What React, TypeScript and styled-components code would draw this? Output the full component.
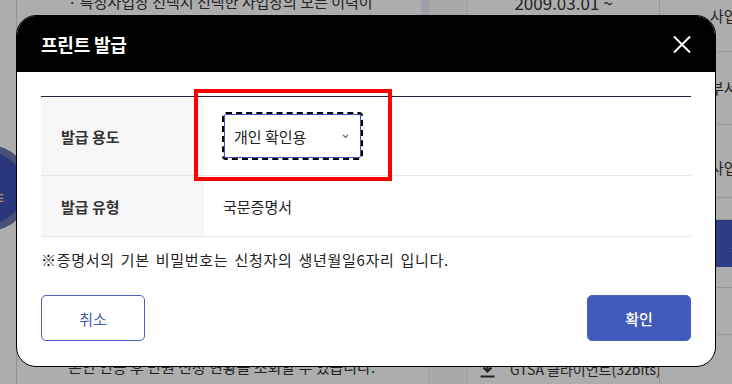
import React from "react";
import styled, { createGlobalStyle } from "styled-components";

const GlobalStyle = createGlobalStyle`
  html, body { margin: 0; padding: 0; }
  body {
    width: 732px; height: 384px; overflow: hidden;
    font-family: "Noto Sans CJK KR", "Noto Sans", sans-serif;
    background: #fff;
  }
  * { box-sizing: border-box; }
`;

/* ---------- background page ---------- */
const Page = styled.div`
  width: 732px;
  height: 384px;
  overflow: hidden;
  display: flex;
  background: #fff;
  color: #333;
  font-size: 15px;
`;

const LeftPane = styled.div`
  flex: none;
  width: 405px;
  margin-left: 16px;
  display: flex;
  flex-direction: column;
  justify-content: space-between;
  border-left: 1px solid #d4d8f0;
  overflow: hidden;
`;

const PaneText = styled.div<{ $top?: number; $bottom?: number }>`
  line-height: 20px;
  padding-left: 51px;
  margin-top: ${(p) => p.$top ?? 0}px;
  margin-bottom: ${(p) => p.$bottom ?? 0}px;
  white-space: nowrap;
  color: #333;
`;

const ScrollTrack = styled.div`
  flex: none;
  width: 8px;
  display: flex;
  flex-direction: column;
  border-right: 1px solid #e4e4ea;
`;

const ScrollThumb = styled.div`
  height: 40px;
  background: #e8ebf8;
`;

const NarrowCol = styled.div`
  flex: none;
  width: 39px;
  border-right: 1px solid #ececec;
  background: #fafafa;
`;

const DateCol = styled.div`
  flex: none;
  width: 191px;
  display: flex;
  flex-direction: column;
  justify-content: space-between;
`;

const DateText = styled.div`
  line-height: 20px;
  margin-top: -7px;
  font-size: 17px;
  text-align: center;
  color: #333;
  white-space: nowrap;
`;

const Download = styled.div`
  display: flex;
  align-items: center;
  gap: 15px;
  margin-bottom: 5px;
  padding-left: 12px;
  line-height: 20px;
  font-size: 14px;
  color: #333;
  white-space: nowrap;
`;

const DownloadIcon = styled.svg`
  flex: none;
  margin-top: 4px;
`;

const RightCol = styled.div`
  flex: 1;
  min-width: 0;
  display: flex;
  flex-direction: column;
  border-left: 1px solid #dcdcdc;
  overflow: hidden;
`;

const RightCell = styled.div<{ $h: number; $blue?: boolean; $pt?: number; $pl?: number }>`
  height: ${(p) => p.$h}px;
  flex: none;
  display: flex;
  align-items: ${(p) => (p.$pt !== undefined ? "flex-start" : "center")};
  padding-top: ${(p) => p.$pt ?? 0}px;
  padding-left: ${(p) => p.$pl ?? 50}px;
  line-height: 20px;
  border-bottom: 1px solid ${(p) => (p.$blue ? "transparent" : "#e0e0e0")};
  background: ${(p) => (p.$blue ? "#4659c4" : "transparent")};
  color: ${(p) => (p.$blue ? "#fff" : "#333")};
  white-space: nowrap;
`;

const FloatBadge = styled.div`
  position: absolute;
  left: -55px;
  top: 145px;
  width: 86px;
  height: 86px;
  border-radius: 50%;
  background: #6b76b3;
  display: flex;
  align-items: center;
  justify-content: center;
`;

const FloatInner = styled.div`
  width: 72px;
  height: 72px;
  border-radius: 50%;
  background: #3e51b5;
  display: flex;
  align-items: center;
  justify-content: flex-end;
  padding: 18px 19px 0 0;
  color: #ffd54a;
  font-size: 14px;
  font-weight: 700;
`;

/* ---------- modal ---------- */
const Overlay = styled.div`
  position: fixed;
  inset: 0;
  background: rgba(0, 0, 0, 0.32);
  display: flex;
  justify-content: center;
  align-items: flex-start;
  padding-top: 15px;
`;

const Modal = styled.div`
  width: 700px;
  background: #fff;
  border: 1px solid #000;
  border-radius: 20px;
  overflow: hidden;
  font-family: "Noto Sans CJK KR", "Noto Sans", sans-serif;
`;

const Header = styled.div`
  height: 56px;
  background: #000;
  display: flex;
  align-items: center;
  justify-content: space-between;
  padding: 0 24px;
`;

const Title = styled.h2`
  margin: 0;
  font-size: 18px;
  font-weight: 700;
  color: #fff;
  letter-spacing: -0.2px;
`;

const CloseButton = styled.button`
  border: 0;
  background: none;
  padding: 0;
  width: 18px;
  height: 18px;
  display: flex;
  align-items: center;
  justify-content: center;
  cursor: pointer;
`;

const Body = styled.div`
  padding: 24px 24px 25px;
`;

const Table = styled.div`
  position: relative;
  border-top: 1px solid #1c2344;
`;

const Row = styled.div<{ $h: number }>`
  display: grid;
  grid-template-columns: 163px 1fr;
  height: ${(p) => p.$h + 1}px;
  border-bottom: 1px solid #e6e6e6;
`;

const Label = styled.div`
  background: #f7f7f7;
  display: flex;
  align-items: center;
  padding-left: 20px;
  font-size: 15px;
  font-weight: 700;
  color: #333;
`;

const Value = styled.div`
  display: flex;
  align-items: center;
  padding-left: 19px;
  font-size: 15px;
  color: #222;
`;

const Select = styled.div`
  width: 137px;
  height: 44px;
  margin-left: 1px;
  border: 1px solid #3f51b5;
  border-radius: 2px;
  outline: 2px dashed #000;
  outline-offset: 0;
  display: flex;
  align-items: center;
  justify-content: space-between;
  padding: 0 11px 0 9px;
  font-size: 15px;
  color: #222;
`;

const Highlight = styled.div`
  position: absolute;
  left: 153px;
  top: -8px;
  width: 198px;
  height: 92px;
  border: 4px solid #ff0000;
  pointer-events: none;
`;

const Notice = styled.p`
  margin: 12px 0 0;
  font-size: 15px;
  line-height: 22px;
  word-spacing: 2px;
  letter-spacing: 0.7px;
  color: #222;
`;

const Actions = styled.div`
  margin-top: 24px;
  display: flex;
  justify-content: space-between;
`;

const ActionButton = styled.button<{ $primary?: boolean }>`
  width: 104px;
  height: 46px;
  border-radius: 5px;
  border: 1px solid #4a5fc1;
  background: ${(p) => (p.$primary ? "#435abd" : "#fff")};
  color: ${(p) => (p.$primary ? "#fff" : "#4358bd")};
  font-family: "Noto Sans CJK KR", "Noto Sans", sans-serif;
  font-size: 15px;
  font-weight: ${(p) => (p.$primary ? 500 : 400)};
  cursor: pointer;
`;

export default function App() {
  return (
    <>
      <GlobalStyle />
      <Page>
        <LeftPane>
          <PaneText $top={-8}>· 특정사업장 선택시 선택한 사업장의 모든 이력이</PaneText>
          <PaneText $bottom={7}>본인 인증 후 민원 신청 현황을 조회할 수 있습니다.</PaneText>
        </LeftPane>
        <ScrollTrack>
          <ScrollThumb />
        </ScrollTrack>
        <NarrowCol />
        <DateCol>
          <DateText>2009.03.01 ~</DateText>
          <Download>
            <DownloadIcon width="15" height="14" viewBox="0 0 15 14">
              <path d="M7.5 0 V7 M3.5 3.5 L7.5 7.5 L11.5 3.5" stroke="#333" strokeWidth="2.2" fill="none" />
              <rect x="0.5" y="11.5" width="14" height="2" fill="#333" />
            </DownloadIcon>
            <span>GTSA 클라이언트(32bits)</span>
          </Download>
        </DateCol>
        <RightCol>
          <RightCell $h={52} $pt={6}>사업장</RightCell>
          <RightCell $h={73}>부서</RightCell>
          <RightCell $h={73} $pt={33}>사업장</RightCell>
          <RightCell $h={22} />
          <RightCell $h={47} $blue $pl={71}>
            조회
          </RightCell>
          <RightCell $h={21} />
          <RightCell $h={47} />
        </RightCol>
        <FloatBadge>
          <FloatInner>≡</FloatInner>
        </FloatBadge>
      </Page>

      <Overlay>
        <Modal role="dialog" aria-label="프린트 발급">
          <Header>
            <Title>프린트 발급</Title>
            <CloseButton aria-label="닫기">
              <svg width="18" height="17" viewBox="0 0 18 17">
                <path d="M1 0.5 L17 16.5 M17 0.5 L1 16.5" stroke="#fff" strokeWidth="2" />
              </svg>
            </CloseButton>
          </Header>
          <Body>
            <Table>
              <Row $h={78}>
                <Label>발급 용도</Label>
                <Value>
                  <Select>
                    <span>개인 확인용</span>
                    <svg width="7" height="5" viewBox="0 0 7 5">
                      <path d="M1 1 L3.5 3.5 L6 1" stroke="#666" strokeWidth="1.1" fill="none" />
                    </svg>
                  </Select>
                </Value>
              </Row>
              <Row $h={60}>
                <Label>발급 유형</Label>
                <Value>국문증명서</Value>
              </Row>
              <Highlight />
            </Table>
            <Notice>※증명서의 기본 비밀번호는 신청자의 생년월일6자리 입니다.</Notice>
            <Actions>
              <ActionButton>취소</ActionButton>
              <ActionButton $primary>확인</ActionButton>
            </Actions>
          </Body>
        </Modal>
      </Overlay>
    </>
  );
}
